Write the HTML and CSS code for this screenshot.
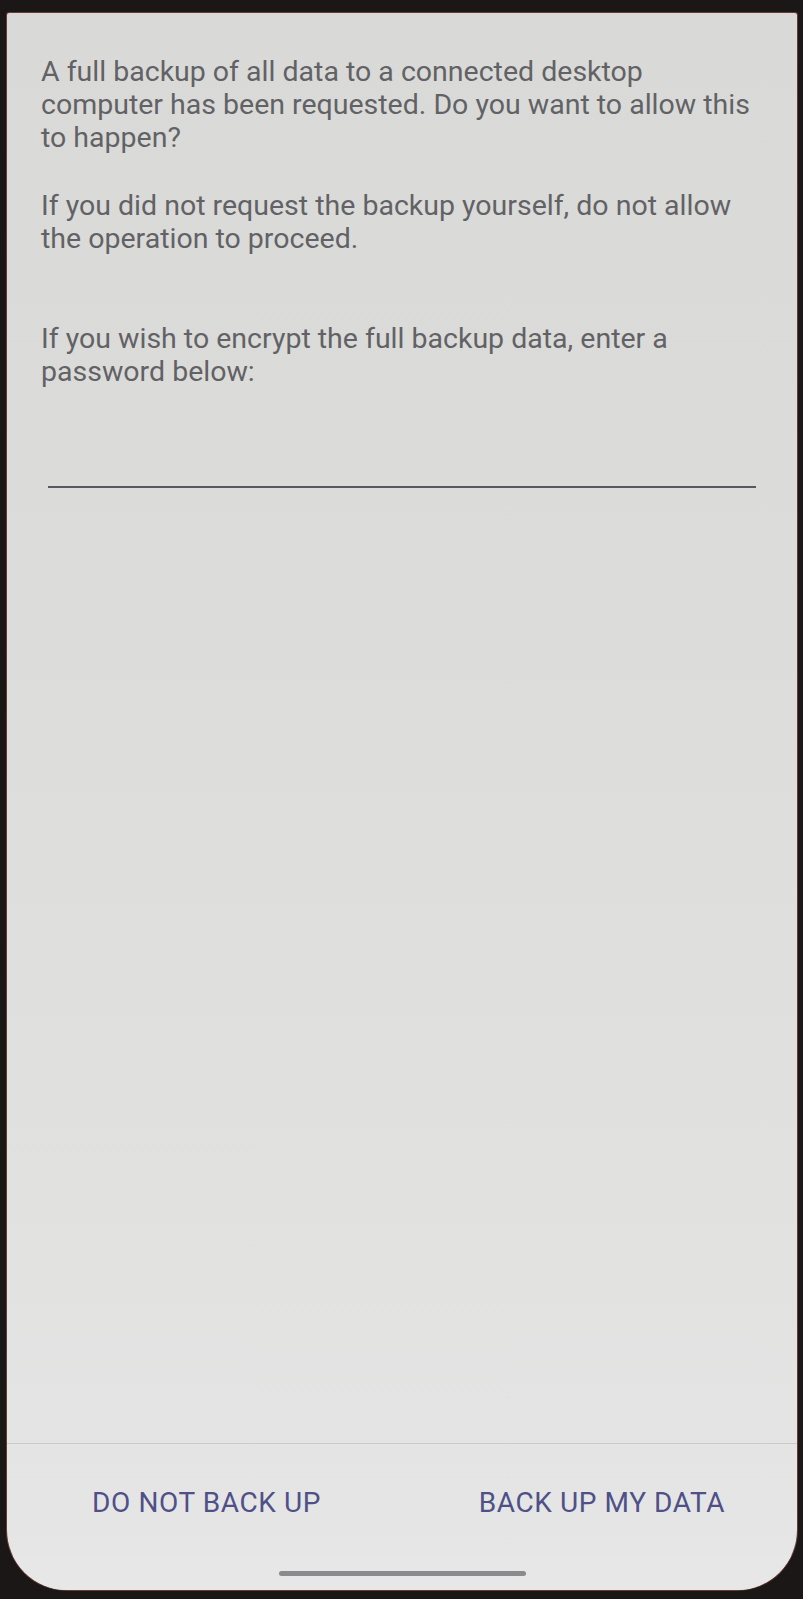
FILE: index.html
```html
<!DOCTYPE html>
<html>
<head>
<meta charset="utf-8">
<link rel="stylesheet" href="styles.css">
</head>
<body>
<div class="screen">
  <div class="content">
    <p class="msg msg-first">A full backup of all data to a connected desktop computer has been requested. Do you want to allow this to happen?</p>
    <p class="msg msg-second">If you did not request the backup yourself, do not allow the operation to proceed.</p>
    <p class="msg msg-third">If you wish to encrypt the full backup data, enter a password below:</p>
    <div class="field"></div>
  </div>
  <div class="divider"></div>
  <div class="buttons">
    <span class="btn">DO NOT BACK UP</span>
    <span class="btn">BACK UP MY DATA</span>
  </div>
  <div class="nav">
    <div class="home-bar"></div>
  </div>
</div>
</body>
</html>
```

FILE: styles.css
```css
html, body {
  margin: 0;
  padding: 0;
}
body {
  width: 803px;
  height: 1599px;
  background: #1b1717;
  overflow: hidden;
  font-family: Roboto, "Noto Sans", sans-serif;
}
.screen {
  margin: 13px 0 0 7px;
  width: 790px;
  height: 1577px;
  border-radius: 2px 2px 60px 60px;
  background: linear-gradient(180deg, #d9dad7 0%, #dcdcda 40%, #e1e1e0 75%, #e6e6e6 100%);
  box-shadow: 0 0 0 1px #6a3a36;
  display: flex;
  flex-direction: column;
  overflow: hidden;
}
.content {
  flex: 1;
  padding: 42px 36px 0 34px;
}
.msg {
  margin: 0;
  width: 722px;
  font-size: 28.5px;
  line-height: 33px;
  color: #626266;
}
.msg-second {
  margin-top: 35px;
}
.msg-third {
  margin-top: 67px;
}
.field {
  margin: 98px 0 0 7px;
  width: 708px;
  height: 2px;
  background: #58585e;
}
.divider {
  height: 1px;
  background: #cbcbcb;
}
.buttons {
  height: 111px;
  padding: 42px 72px 0 85px;
  box-sizing: border-box;
  display: flex;
  justify-content: space-between;
  align-items: flex-start;
}
.btn {
  font-size: 28px;
  line-height: 33px;
  font-weight: 400;
  letter-spacing: 0.6px;
  color: #4f5088;
}
.nav {
  height: 35px;
  background: #e7e7e7;
  display: flex;
  justify-content: center;
  padding-top: 16px;
  box-sizing: border-box;
}
.home-bar {
  width: 247px;
  height: 5px;
  border-radius: 3px;
  background: #8b8b8d;
}
```
